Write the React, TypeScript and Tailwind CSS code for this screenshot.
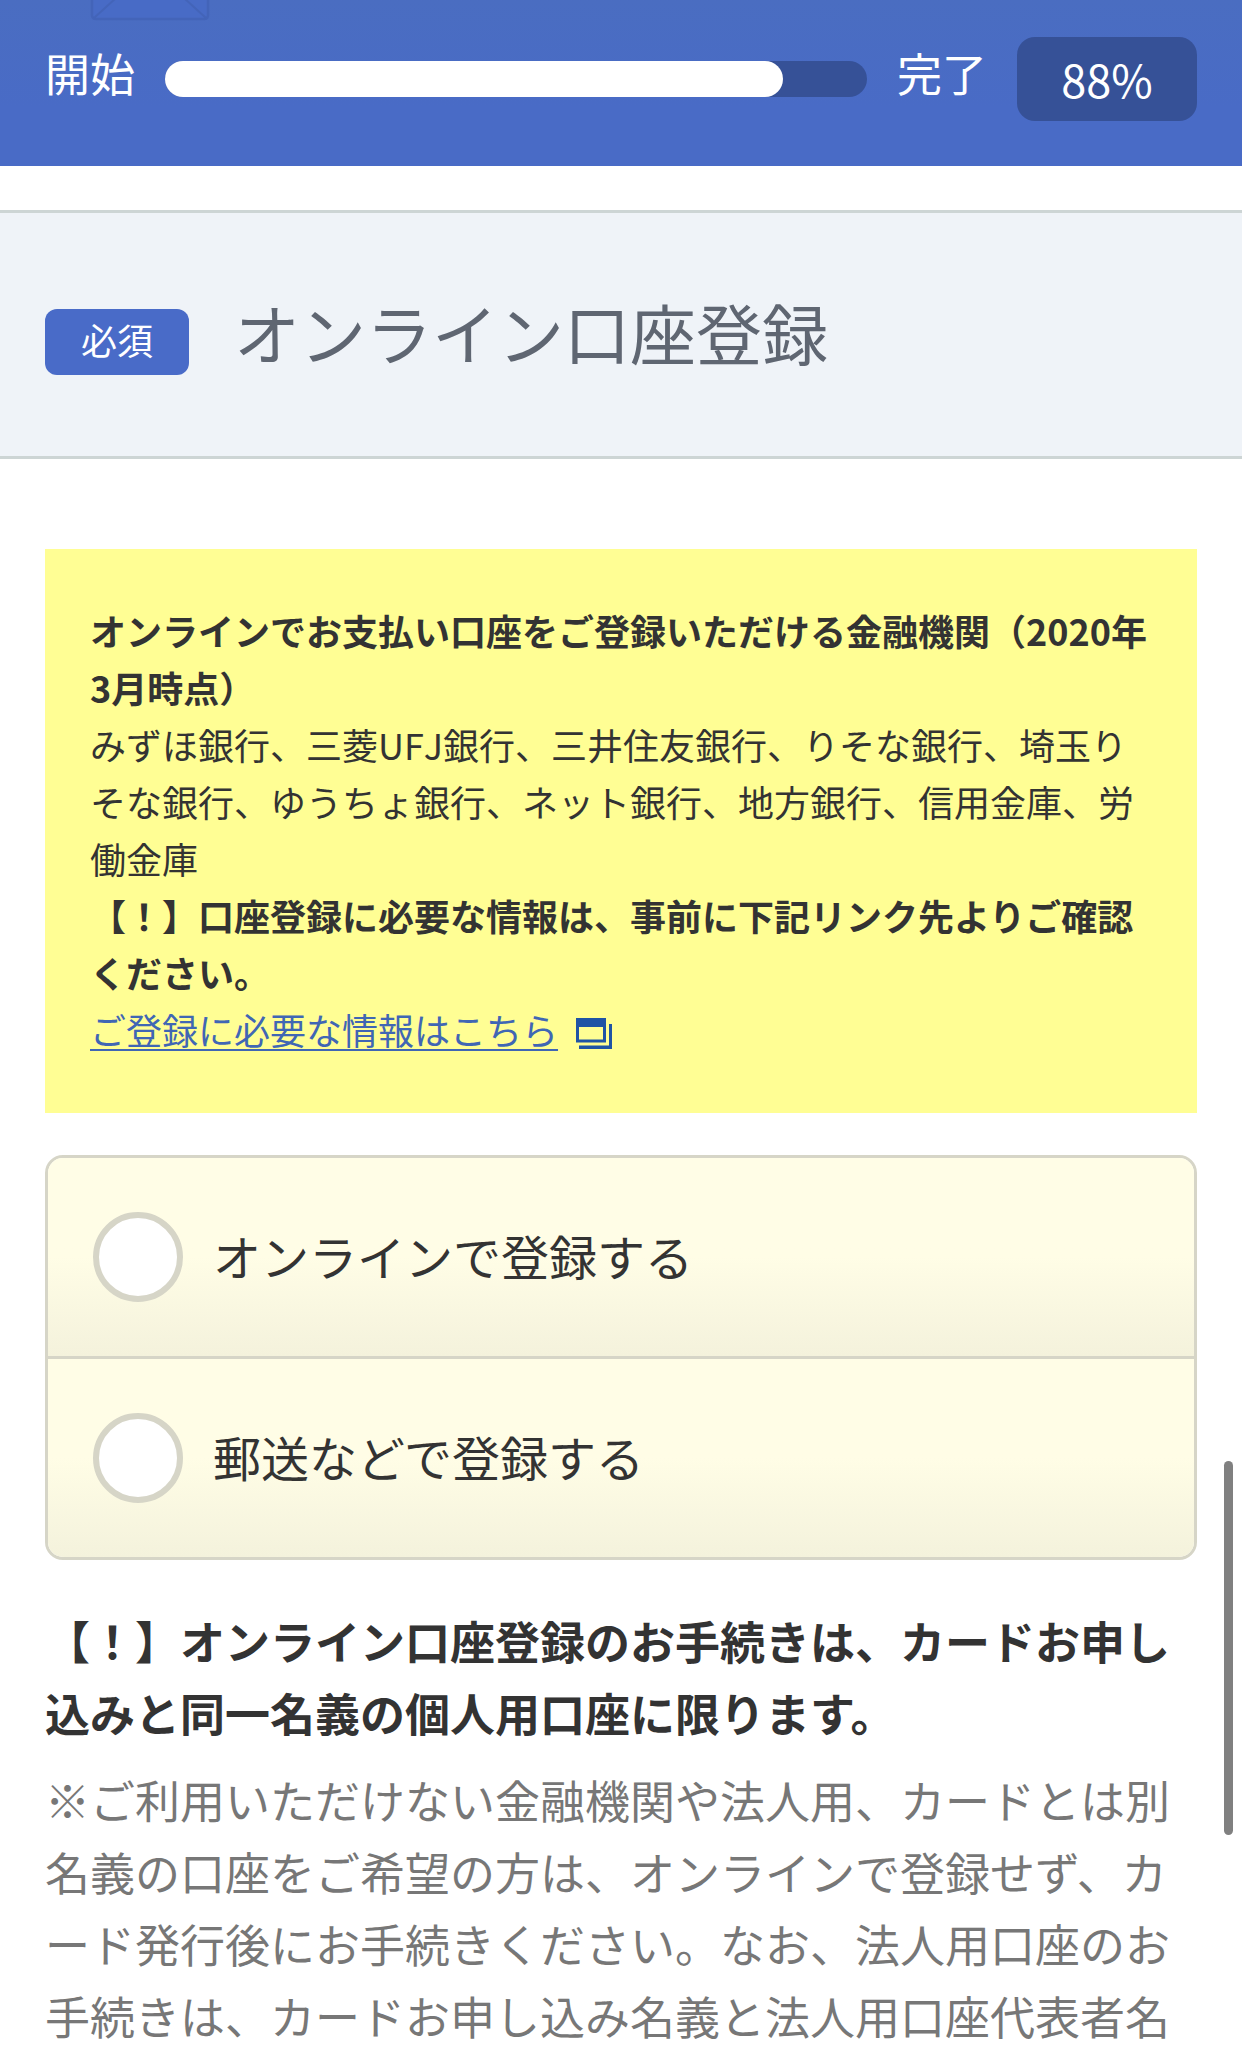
import React from 'react';

const PROGRESS = 88;

const OPTIONS = ['オンラインで登録する', '郵送などで登録する'];

function EnvelopeOutline() {
  return (
    <svg
      className="absolute left-[90px] top-0"
      width="120"
      height="22"
      viewBox="0 0 120 22"
      fill="none"
      stroke="#4364b9"
      strokeWidth="2.5"
    >
      <path d="M2 -4V15Q2 19 6 19H114Q118 19 118 15V-4Z" fill="#486bc6" />
      <path d="M4 18L26 -2M116 18L94 -2" strokeWidth="2" />
    </svg>
  );
}

function NewWindowIcon() {
  return (
    <svg className="ml-[18px] mt-[7px]" width="36" height="31" viewBox="0 0 36 31" fill="#1f54a5">
      <path d="M0 0H30V24.500H0ZM3 9V21.500H27V9Z" fillRule="evenodd" />
      <path d="M33 6H36V31H3V27.500H33Z" />
    </svg>
  );
}

function ProgressHeader() {
  return (
    <header className="relative h-[166px] pl-[45px] pr-[45px] pt-[37px] flex items-start bg-linear-to-b from-[#4a6dc1] to-[#496bc6] to-65% text-white text-[45px] leading-[72px] overflow-hidden">
      <EnvelopeOutline />
      <span className="w-[90px]">開始</span>
      <div className="ml-[30px] mt-6 w-[702px] h-9 rounded-full bg-[#365197]">
        <div className="h-full rounded-full bg-white" style={{ width: `${PROGRESS}%` }}></div>
      </div>
      <span className="ml-[30px] w-[90px]">完了</span>
      <div className="ml-[30px] w-[180px] h-[84px] rounded-[18px] bg-[#365197] text-center leading-[84px]">
        {PROGRESS}%
      </div>
    </header>
  );
}

function SectionTitle() {
  return (
    <div className="mt-11 h-[249px] border-y-[3px] border-[#cdd5d5] bg-[#eff3f8] px-[45px] flex items-center">
      <span className="mt-[15px] w-36 h-[66px] rounded-xl bg-[#496bc8] text-white text-4xl leading-[60px] text-center">
        必須
      </span>
      <h1 className="ml-[45px] mb-[7px] text-[66px] leading-[96px] text-[#5f6672]">オンライン口座登録</h1>
    </div>
  );
}

function BankNotice() {
  return (
    <div className="mt-[90px] bg-[#fffe94] px-[45px] pt-[53px] pb-[55px] text-4xl leading-[57px] text-[#333] whitespace-nowrap">
      <p className="font-bold">
        オンラインでお支払い口座をご登録いただける金融機関（2020年
        <br />
        3月時点）
      </p>
      <p className="[font-kerning:none]">
        みずほ銀行、三菱UFJ銀行、三井住友銀行、りそな銀行、埼玉り
        <br />
        そな銀行、ゆうちょ銀行、ネット銀行、地方銀行、信用金庫、労
        <br />
        働金庫
      </p>
      <p className="font-bold">
        【！】口座登録に必要な情報は、事前に下記リンク先よりご確認
        <br />
        ください。
      </p>
      <div className="flex items-center">
        <a href="#" className="text-[#4066b4] underline decoration-2 underline-offset-4">
          ご登録に必要な情報はこちら
        </a>
        <NewWindowIcon />
      </div>
    </div>
  );
}

function RegistrationOptions() {
  return (
    <div className="mt-[42px] rounded-[18px] border-[3px] border-[#d6d5c7] divide-y-[3px] divide-[#d6d5c7] overflow-hidden">
      {OPTIONS.map((label) => (
        <label
          key={label}
          className="box-content h-[198px] pl-[45px] flex items-center bg-linear-to-b from-[#fffde6] from-50% to-[#f4f2dc]"
        >
          <span className="w-[90px] h-[90px] rounded-full border-[6px] border-[#d6d5c7] bg-white"></span>
          <span className="ml-[30px] mb-[5px] text-5xl leading-[72px] text-[#333]">{label}</span>
        </label>
      ))}
    </div>
  );
}

export default function App() {
  return (
    <div
      lang="ja"
      className="relative w-[1242px] h-[2057px] overflow-hidden bg-white font-['Noto_Sans_CJK_JP',sans-serif]"
    >
      <ProgressHeader />
      <SectionTitle />
      <main className="px-[45px]">
        <BankNotice />
        <RegistrationOptions />
        <div className="mt-[45px] text-[45px] leading-[72px] whitespace-nowrap">
          <p className="font-bold text-[#333]">
            【！】オンライン口座登録のお手続きは、カードお申し
            <br />
            込みと同一名義の個人用口座に限ります。
          </p>
          <p className="mt-[15px] text-[#777]">
            ※ご利用いただけない金融機関や法人用、カードとは別
            <br />
            名義の口座をご希望の方は、オンラインで登録せず、カ
            <br />
            ード発行後にお手続きください。なお、法人用口座のお
            <br />
            手続きは、カードお申し込み名義と法人用口座代表者名
          </p>
        </div>
      </main>
      {/* scroll indicator */}
      <div className="absolute left-[1224px] top-[1461px] w-[9px] h-[374px] rounded-full bg-[#808080]"></div>
    </div>
  );
}
